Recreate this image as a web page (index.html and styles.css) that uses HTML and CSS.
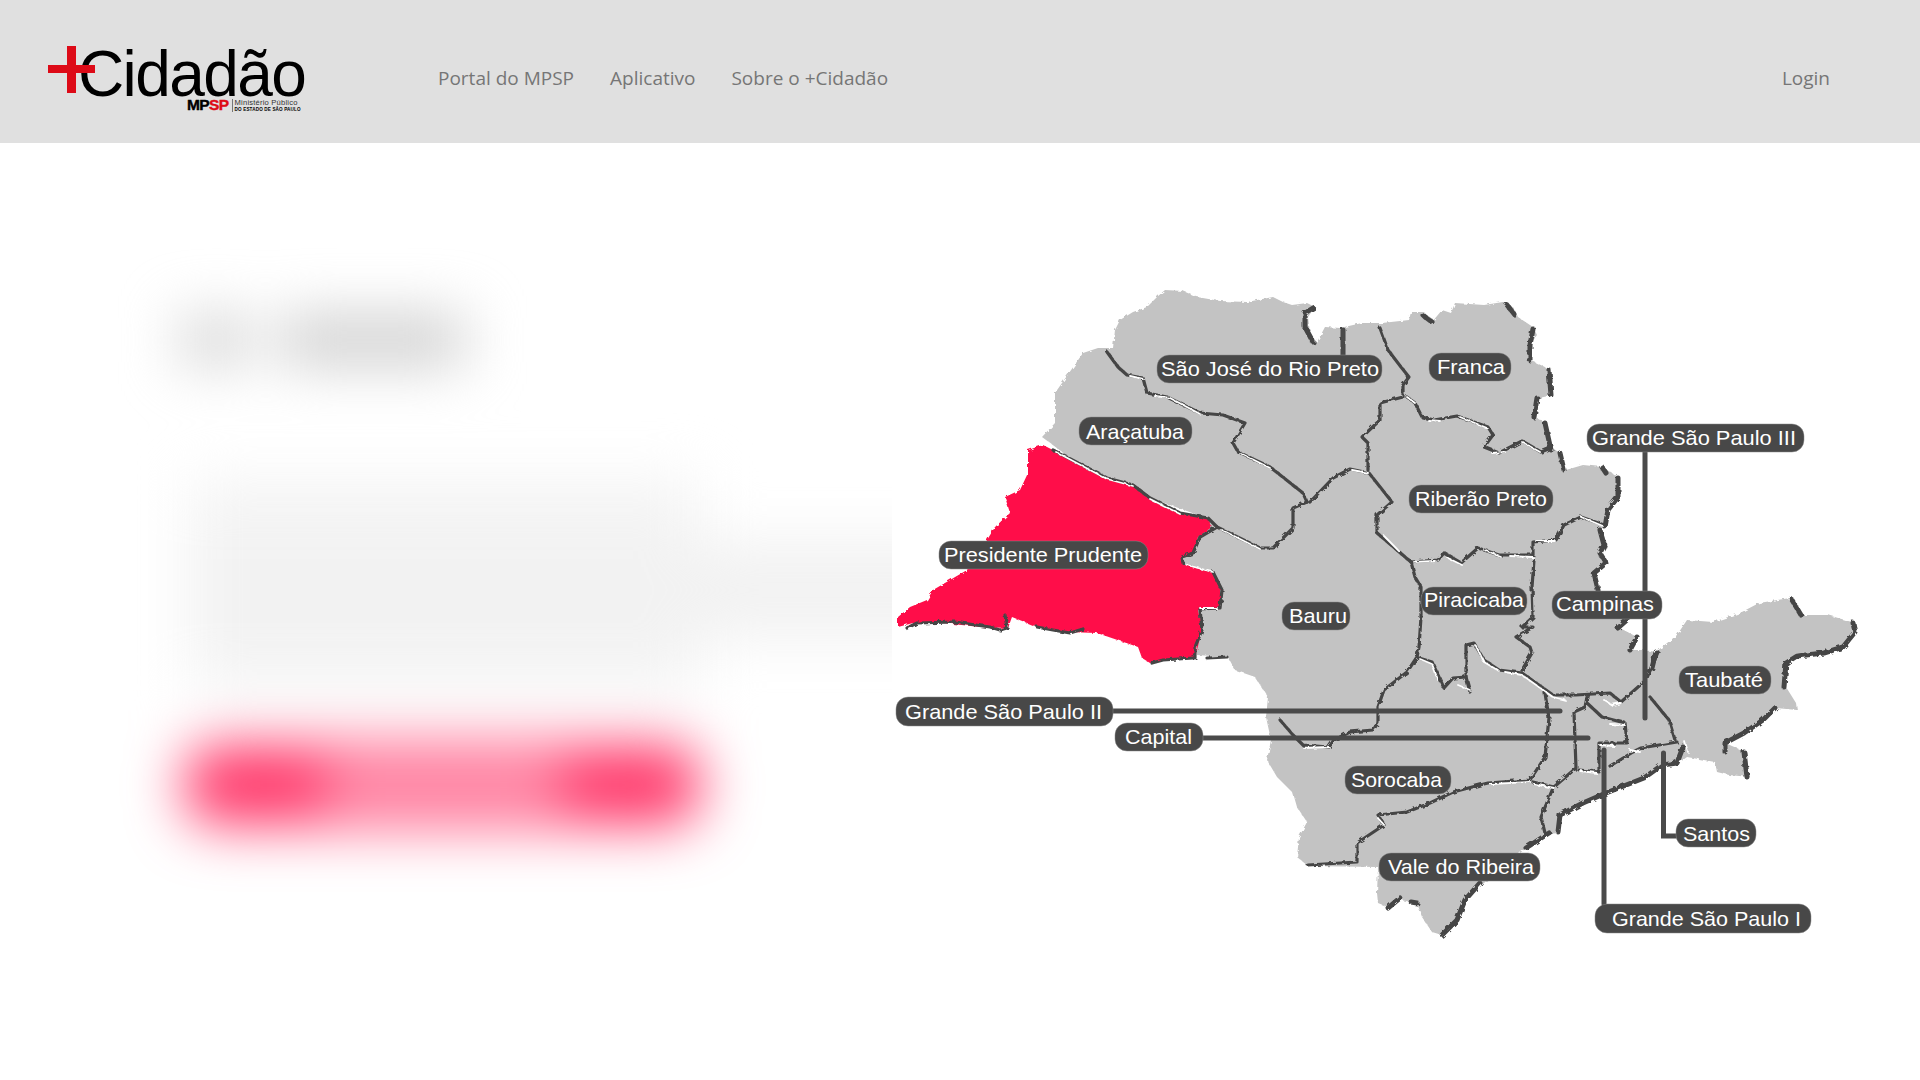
FILE: index.html
```html
<!DOCTYPE html>
<html lang="pt-BR">
<head>
<meta charset="utf-8">
<title>+Cidadão</title>
<link rel="stylesheet" href="styles.css">
</head>
<body>
<header class="topbar">
  <a class="logo" href="#">
    <span class="logo-name">Cidadão</span>
    <span class="logo-plus"></span>
    <span class="logo-org">
      <span class="org-mark">MP<span class="org-red">SP</span></span>
      <span class="org-text">
        <span class="org-line">Ministério Público</span>
        <span class="org-sub">DO ESTADO DE SÃO PAULO</span>
      </span>
    </span>
  </a>
  <nav class="nav">
    <a href="#">Portal do MPSP</a>
    <a href="#">Aplicativo</a>
    <a href="#">Sobre o +Cidadão</a>
  </nav>
  <a class="login" href="#">Login</a>
</header>
<main class="main">
  <section class="intro">
    <div class="intro-blur">
      <div class="blob-title"><span class="t1"></span><span class="t2"></span></div>
      <div class="blob-text">
        <div class="bl a"></div>
        <div class="bl b"></div>
        <div class="bl c"></div>
      </div>
      <div class="blob-button"><span></span></div>
    </div>
  </section>
  <section class="map-col">
    <svg class="map" viewBox="892 143 1028 937" width="1028" height="937" xmlns="http://www.w3.org/2000/svg">
      <defs>
        <filter id="rough" x="-5%" y="-5%" width="110%" height="110%">
          <feTurbulence type="fractalNoise" baseFrequency="0.22" numOctaves="2" seed="4" result="n"/>
          <feDisplacementMap in="SourceGraphic" in2="n" scale="4"/>
        </filter>
      </defs>
      <g filter="url(#rough)">
        <polygon class="land" points="1042,437 1055,423 1055,393 1062,383 1083,353 1098,348 1113,348 1115,330 1120,320 1133,312 1147,307 1157,297 1165,290 1183,291 1197,297 1220,301 1247,302 1273,297 1283,302 1292,305 1307,303 1315,307 1308,317 1310,333 1317,342 1325,327 1340,328 1362,323 1382,323 1409,320 1411,312 1424,312 1432,322 1442,310 1451,313 1455,303 1484,305 1503,302 1514,308 1518,317 1533,327 1537,335 1530,345 1530,360 1545,367 1553,377 1553,395 1539,398 1535,417 1545,423 1551,447 1560,453 1566,470 1583,465 1602,467 1620,478 1620,497 1610,510 1606,527 1600,528 1608,545 1602,553 1608,563 1595,573 1600,590 1627,620 1618,627 1637,637 1629,650 1644,650 1656,652 1677,635 1687,620 1713,622 1740,613 1759,603 1790,598 1801,615 1828,615 1855,623 1857,632 1843,647 1824,653 1797,653 1786,663 1786,687 1796,703 1797,710 1775,708 1763,720 1744,733 1725,743 1746,752 1750,777 1729,775 1717,772 1715,762 1687,757 1679,763 1660,767 1644,778 1606,793 1583,803 1560,815 1560,832 1545,833 1526,848 1484,883 1465,900 1457,920 1442,935 1432,932 1422,917 1417,903 1400,900 1390,908 1378,903 1377,893 1378,867 1308,866 1297,857 1299,837 1307,822 1297,807 1293,793 1277,777 1267,760 1271,740 1266,717 1268,697 1255,677 1235,670 1228,657 1197,655 1195,600 1175,560 1190,530 1212,520 1100,480"/>
        <polygon class="active" points="1028,450 1043,445 1053,450 1107,478 1133,485 1150,498 1180,513 1208,518 1212,527 1198,537 1193,552 1182,557 1185,565 1213,573 1220,587 1220,607 1198,610 1202,630 1195,658 1173,658 1150,663 1142,658 1138,647 1097,633 1067,632 1037,627 1012,617 1008,628 980,627 943,623 913,623 898,627 898,617 910,607 927,600 933,590 967,570 987,540 995,527 1010,513 1005,497 1020,490 1028,473"/>

        <!-- internal borders -->
        <polyline class="bd" points="1107,352 1118,367 1127,375 1143,378 1147,393 1167,397 1200,413 1223,415 1245,423 1233,443 1238,452 1270,467 1303,493 1307,502"/>
        <polyline class="bd" points="1053,450 1107,478 1133,485 1150,498 1180,513 1208,518 1217,527 1260,548 1273,548 1293,528 1293,508 1307,502"/>
        <polyline class="bd" points="1310,502 1333,478 1350,469 1369,473 1392,502 1377,515 1377,533 1411,562 1438,560 1444,553 1461,563 1478,548 1499,555 1533,555 1533,542 1556,540 1564,525 1581,517 1604,525"/>
        <polyline class="bd" points="1368,470 1368,443 1362,437 1380,420 1380,403 1403,397 1403,385 1409,377 1401,367 1388,350 1380,328"/>
        <polyline class="bd" points="1407,397 1415,403 1422,417 1434,420 1457,416 1488,427 1493,435 1484,447 1499,453 1522,441 1541,452 1551,448"/>
        <polyline class="bd" points="1411,562 1415,577 1421,587 1421,617 1419,647 1417,657 1407,672 1384,690 1378,707 1378,723 1373,730 1350,732 1334,740 1329,747 1303,745 1293,735 1280,720"/>
        <polyline class="bd" points="1534,560 1532,587 1533,617 1522,627 1533,627 1516,637 1530,647 1532,653 1522,670"/>
        <polyline class="bd" points="1419,658 1432,662 1444,688 1453,678 1466,677 1466,645 1474,643 1484,660 1499,670 1522,673 1553,695 1576,695 1610,693 1621,702 1646,680 1658,652"/>
        <polyline class="bd" points="1466,677 1470,692"/>
        <polyline class="bd" points="1545,693 1549,718 1545,757 1530,780 1488,783 1480,785 1453,792 1430,803 1407,812 1378,815 1384,825 1357,843 1357,862 1308,865"/>
        <polyline class="bd" points="1533,782 1554,787 1576,768 1574,712 1585,707 1587,697"/>
        <polyline class="bd" points="1553,788 1541,817 1545,833"/>
        <polyline class="bd" points="1587,703 1602,717 1625,723 1627,743 1599,743 1599,772 1579,770"/>
        <polyline class="bd" points="1610,766 1633,752 1641,748 1677,742"/>
        <polyline class="bd" points="1650,697 1669,720 1675,740"/>
        <polyline class="bd" points="1217,527 1200,537 1193,553 1182,557 1183,563"/>
        <polyline class="bd" points="1213,572 1222,590 1220,608 1200,609 1202,630 1195,647 1195,658"/>

        <!-- coast and outer edge -->
        <polyline class="coast" points="1313,308 1305,313 1305,327 1313,342"/>
        <polyline class="coast" points="1343,330 1343,356"/>
        <polyline class="coast" points="1507,305 1514,314"/>
        <polyline class="coast" points="1424,316 1432,322"/>
        <polyline class="coast" points="1533,329 1530,345 1530,360"/>
        <polyline class="coast" points="1549,370 1551,395"/>
        <polyline class="coast" points="1537,398 1534,417"/>
        <polyline class="coast" points="1545,423 1551,450"/>
        <polyline class="coast" points="1560,453 1564,470"/>
        <polyline class="coast" points="1602,467 1606,473"/>
        <polyline class="coast" points="1618,478 1618,497 1608,510 1605,527"/>
        <polyline class="coast" points="1600,530 1604,545 1600,553 1606,563 1594,573 1598,590"/>
        <polyline class="coast" points="1627,620 1618,628"/>
        <polyline class="coast" points="1637,637 1630,650"/>
        <polyline class="coast" points="1656,652 1652,668"/>
        <polyline class="coast" points="1792,600 1801,615"/>
        <polyline class="coast" points="1853,623 1855,632 1843,647 1824,653 1797,656 1786,663 1784,687"/>
        <polyline class="coast" points="1775,708 1763,720 1744,733 1725,743 1725,752"/>
        <polyline class="coast" points="1744,752 1747,777"/>
        <polyline class="coast" points="1683,747 1677,763 1662,765 1644,778 1606,793 1583,803 1560,815 1558,832"/>
        <polyline class="coast" points="1549,833 1526,848"/>
        <polyline class="coast" points="1480,883 1465,900 1457,920 1442,935"/>
        <polyline class="coast" points="1388,908 1400,898"/>
        <polyline class="coast" points="1411,902 1417,903"/>
        <polyline class="bd" points="907,628 917,623 955,622 990,627 1000,630 1007,628 1005,615"/>
        <polyline class="bd" points="1037,627 1053,630 1070,633 1083,629"/>
        <polyline class="bd" points="1152,663 1163,660 1193,658"/>
        <polyline class="bd" points="1207,658 1227,657"/>

        <!-- white gaps along the borders -->
        <polyline class="gap" points="1056,452 1107,479 1133,486"/>
        <polyline class="gap" points="1150,499 1180,514"/>
        <polyline class="gap" points="1222,530 1260,549"/>
        <polyline class="gap" points="1130,376 1143,379"/>
        <polyline class="gap" points="1155,396 1170,398 1200,414"/>
        <polyline class="gap" points="1240,453 1270,468"/>
        <polyline class="gap" points="1352,470 1368,473"/>
        <polyline class="gap" points="1187,565 1213,572"/>
        <polyline class="gap" points="1200,608 1217,608"/>
        <polyline class="gap" points="1407,397 1415,403"/>
        <polyline class="gap" points="1428,420 1440,421"/>
        <polyline class="gap" points="1460,417 1487,428"/>
        <polyline class="gap" points="1492,453 1505,452"/>
        <polyline class="gap" points="1522,442 1540,452"/>
        <polyline class="gap" points="1384,536 1400,552"/>
        <polyline class="gap" points="1414,562 1435,561"/>
        <polyline class="gap" points="1448,558 1462,565"/>
        <polyline class="gap" points="1484,550 1500,556"/>
        <polyline class="gap" points="1510,556 1533,557"/>
        <polyline class="gap" points="1536,541 1555,541"/>
        <polyline class="gap" points="1581,517 1603,526"/>
        <polyline class="gap" points="1420,659 1432,664 1438,680"/>
        <polyline class="gap" points="1476,646 1484,662 1499,671"/>
        <polyline class="gap" points="1505,672 1522,675 1553,697 1565,700"/>
        <polyline class="gap" points="1458,685 1470,690"/>
        <polyline class="gap" points="1604,700 1612,705 1621,703"/>
        <polyline class="gap" points="1610,724 1625,725"/>
        <polyline class="gap" points="1600,745 1614,746"/>
        <polyline class="gap" points="1580,771 1597,773"/>
        <polyline class="gap" points="1534,784 1554,788"/>
        <polyline class="gap" points="1490,784 1530,782"/>
        <polyline class="gap" points="1630,750 1640,752"/>
        <polyline class="gap" points="1685,742 1688,752"/>
        <polyline class="gap" points="1303,748 1329,747"/>
        <polyline class="gap" points="1378,818 1384,825"/>
      </g>

      <!-- leader lines -->
      <polyline class="leader" points="1113,711 1560,711"/>
      <polyline class="leader" points="1203,738 1588,738"/>
      <polyline class="leader" points="1645,452 1645,718"/>
      <polyline class="leader" points="1604,750 1604,904"/>
      <polyline class="leader" points="1663.5,753 1663.5,836 1676,836"/>
      <polyline class="leader thin" points="1343,330 1343,355"/>

      <!-- labels -->
      <g class="tags">
        <rect x="1157" y="355" width="225" height="28" rx="12"/><text x="1161" y="376" textLength="218" lengthAdjust="spacingAndGlyphs">São José do Rio Preto</text>
        <rect x="1429" y="353" width="82" height="28" rx="12"/><text x="1437" y="374" textLength="68" lengthAdjust="spacingAndGlyphs">Franca</text>
        <rect x="1587" y="424" width="217" height="28" rx="12"/><text x="1592" y="445" textLength="204" lengthAdjust="spacingAndGlyphs">Grande São Paulo III</text>
        <rect x="1079" y="417" width="113" height="28" rx="12"/><text x="1086" y="439" textLength="98" lengthAdjust="spacingAndGlyphs">Araçatuba</text>
        <rect x="1409" y="485" width="144" height="28" rx="12"/><text x="1415" y="506" textLength="132" lengthAdjust="spacingAndGlyphs">Riberão Preto</text>
        <rect x="939" y="541" width="209" height="28" rx="12"/><text x="944" y="562" textLength="198" lengthAdjust="spacingAndGlyphs">Presidente Prudente</text>
        <rect x="1421" y="587" width="106" height="28" rx="12"/><text x="1424" y="607" textLength="100" lengthAdjust="spacingAndGlyphs">Piracicaba</text>
        <rect x="1552" y="591" width="110" height="28" rx="12"/><text x="1556" y="611" textLength="98" lengthAdjust="spacingAndGlyphs">Campinas</text>
        <rect x="1282" y="602" width="68" height="28" rx="12"/><text x="1289" y="623" textLength="58" lengthAdjust="spacingAndGlyphs">Bauru</text>
        <rect x="1679" y="666" width="92" height="28" rx="12"/><text x="1685" y="687" textLength="78" lengthAdjust="spacingAndGlyphs">Taubaté</text>
        <rect x="896" y="697" width="217" height="29" rx="12"/><text x="905" y="719" textLength="197" lengthAdjust="spacingAndGlyphs">Grande São Paulo II</text>
        <rect x="1115" y="723" width="88" height="28" rx="12"/><text x="1125" y="744" textLength="67" lengthAdjust="spacingAndGlyphs">Capital</text>
        <rect x="1345" y="766" width="106" height="28" rx="12"/><text x="1351" y="787" textLength="91" lengthAdjust="spacingAndGlyphs">Sorocaba</text>
        <rect x="1676" y="819" width="80" height="28" rx="12"/><text x="1683" y="841" textLength="67" lengthAdjust="spacingAndGlyphs">Santos</text>
        <rect x="1379" y="853" width="161" height="28" rx="12"/><text x="1388" y="874" textLength="146" lengthAdjust="spacingAndGlyphs">Vale do Ribeira</text>
        <rect x="1595" y="904" width="216" height="29" rx="12"/><text x="1612" y="926" textLength="189" lengthAdjust="spacingAndGlyphs">Grande São Paulo I</text>
      </g>
    </svg>
  </section>
</main>
</body>
</html>
```
FILE: styles.css
```css
* { box-sizing: border-box; }
html, body { margin: 0; height: 100%; background: #fff; overflow: hidden; }
body { font-family: "Open Sans", "Noto Sans", sans-serif; }
a { text-decoration: none; color: inherit; }

.topbar {
  height: 143px;
  background: #e0e0e0;
  display: flex;
  align-items: center;
  padding: 0 0 0 48px;
  color: #767676;
  font-size: 19px;
}
.logo {
  position: relative;
  display: block;
  align-self: flex-start;
  width: 260px;
  height: 70px;
  margin: 46px 130px 0 0;
  color: #000;
  font-family: "Liberation Sans", Arial, sans-serif;
}
.logo-name {
  display: block;
  margin: 4px 0 0 30px;
  font-size: 64px;
  line-height: 48px;
  letter-spacing: -1.6px;
}
.logo-plus {
  position: absolute;
  left: 0;
  top: 0;
  width: 47px;
  height: 47px;
  background:
    linear-gradient(#dd0a17, #dd0a17) 0 19px / 47px 8px no-repeat,
    linear-gradient(#dd0a17, #dd0a17) 19px 0 / 9px 47px no-repeat;
}
.logo-org {
  position: absolute;
  left: 139px;
  top: 52px;
  display: flex;
  align-items: center;
  gap: 3px;
  white-space: nowrap;
}
.org-mark {
  font-size: 15.5px;
  line-height: 14px;
  font-weight: 700;
  letter-spacing: -.6px;
  -webkit-text-stroke: .4px currentColor;
}
.org-red { color: #dd0a17; }
.org-text { display: flex; flex-direction: column; border-left: 1px solid #777; padding-left: 2px; }
.org-line { font-size: 7.6px; line-height: 8px; color: #333; letter-spacing: .2px; }
.org-sub { font-size: 4.6px; line-height: 5px; font-weight: 700; letter-spacing: .15px; }

.nav { display: flex; gap: 36px; margin-top: 13px; }
.login { margin-left: auto; margin-top: 13px; margin-right: 90px; }

.main { display: flex; height: 937px; }
.intro { width: 892px; flex: none; overflow: hidden; }
.intro-blur {
  filter: blur(28px);
  padding: 172px 0 0 180px;
  height: 100%;
}
.blob-title { display: flex; gap: 30px; height: 50px; }
.blob-title .t1 { width: 70px; background: #d6d6d6; }
.blob-title .t2 { width: 185px; background: #cfcfcf; }
.blob-text { margin: 115px 0 0 10px; height: 210px; }
.bl { background: #f2f2f2; }
.bl.a { width: 510px; height: 60px; background: #f4f4f4; }
.bl.b { width: 770px; height: 100px; }
.bl.c { width: 510px; height: 50px; background: #f4f4f4; }
.blob-button {
  margin: 55px 0 0 5px;
  width: 515px;
  height: 80px;
  border-radius: 30px;
  background: #ff3568;
  display: flex;
  align-items: center;
  justify-content: center;
}
.blob-button span { width: 240px; height: 44px; background: #ff9db6; }

.map-col { flex: 1; min-width: 0; }
.map { display: block; }
.land { fill: #c3c3c3; }
.active { fill: #ff1149; }
.bd, .coast, .gap, .leader { fill: none; stroke-linejoin: round; stroke-linecap: round; }
.bd { stroke: #454545; stroke-width: 3.2; }
.coast { stroke: #454545; stroke-width: 5; }
.gap { stroke: #fff; stroke-width: 1.8; }
.leader { stroke: #4a4a4a; stroke-width: 5; stroke-linejoin: miter; }
.leader.thin { stroke-width: 3.6; }
.tags rect { fill: #484848; stroke: #8a8a8a; stroke-width: .5; }
.tags text {
  fill: #fff;
  font-family: "Liberation Sans", Arial, sans-serif;
  font-size: 21px;
}
```
